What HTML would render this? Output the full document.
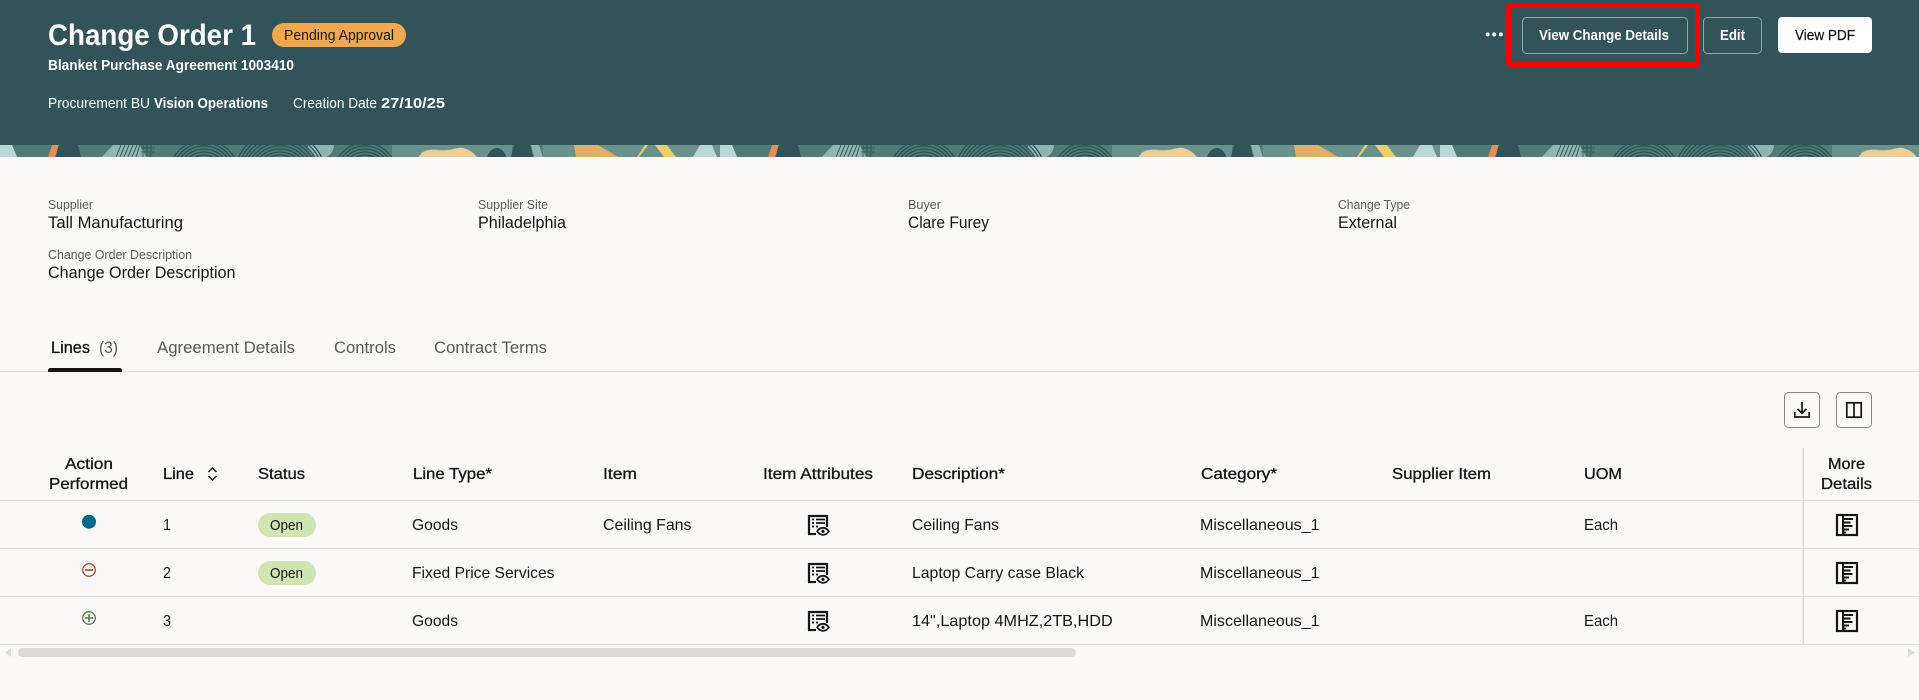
<!DOCTYPE html>
<html lang="en">
<head>
<meta charset="utf-8">
<title>Change Order 1</title>
<style>
html,body{margin:0;padding:0;background:#fbf9f8;width:1919px;height:700px;overflow:hidden}
svg{display:block}
text{font-family:"Liberation Sans",Arial,sans-serif;white-space:pre}
.t{fill:#161513;font-size:16px}
.h{fill:#161513;font-size:16px;stroke:#161513;stroke-width:.3px}
.l{fill:#5b5957;font-size:13px}
.v{fill:#161513;font-size:17px}
.w{fill:#fff;font-size:15px}
.wb{fill:#fff;font-size:15px;font-weight:bold}
.tab{fill:#5b5957;font-size:17px}
</style>
</head>
<body>
<svg width="1919" height="700" viewBox="0 0 1919 700" xmlns="http://www.w3.org/2000/svg">
<defs>
<g id="band">
<svg x="0" y="0" width="720" height="12" viewBox="0 0 720 12">
<rect width="720" height="12" fill="#4f7a76"/>
<rect x="392" width="120" height="12" fill="#6a928c"/>
<rect x="543" width="177" height="12" fill="#6a928c"/>
<polygon points="113,0 140,0 146,12 102,12" fill="#8fb5b1"/>
<g stroke="#32535a" stroke-width="1" fill="none" opacity=".85">
<path d="M116 12L121 0M120 12L125 0M124 12L129 0M128 12L133 0M132 12L137 0M136 12L140 0"/>
<path d="M143 0V12M147 0V12M151 0V12M141 3H155M141 7H155"/>
</g>
<circle cx="321" cy="0" r="13" fill="#8fb5b1"/>
<g fill="none" stroke="#2e4f54" stroke-width="1.200">
<circle cx="204" cy="30" r="20"/><circle cx="204" cy="30" r="23"/><circle cx="204" cy="30" r="26"/><circle cx="204" cy="30" r="29"/><circle cx="204" cy="30" r="32"/><circle cx="204" cy="30" r="35"/>
<circle cx="280" cy="32" r="22"/><circle cx="280" cy="32" r="25"/><circle cx="280" cy="32" r="28"/><circle cx="280" cy="32" r="31"/><circle cx="280" cy="32" r="34"/><circle cx="280" cy="32" r="37"/><circle cx="280" cy="32" r="40"/><circle cx="280" cy="32" r="43"/><circle cx="280" cy="32" r="46"/>
<circle cx="365" cy="30" r="20"/><circle cx="365" cy="30" r="23"/><circle cx="365" cy="30" r="26"/><circle cx="365" cy="30" r="29"/><circle cx="365" cy="30" r="32"/>
</g>
<rect x="392" width="120" height="12" fill="#6a928c"/>
<path d="M419 12C421 6 428 4 438 5C448 6 452 4 458 3C464 2 468 5 472 7L477 12Z" fill="#eccf98"/>
<path d="M487 12C489 6 493 3 497 3C501 3 505 7 506 12Z" fill="#32535a"/>
<polygon points="514,0 530,0 533,12 511,12" fill="#32535a"/>
<polygon points="531,0 539,0 543,12 534,12" fill="#8fb5b1"/>
<polygon points="574,0 598,0 618,12 576,12" fill="#e0ae64"/>
<polygon points="645,0 648,0 639,12 637,12" fill="#f0cb70"/>
<polygon points="655,0 667,0 676,12 664,12" fill="#f0cb70"/>
<polygon points="700,0 712,0 717,12 693,12" fill="#bcd6d8"/>
<polygon points="-20,0 12,0 17,12 -27,12" fill="#bcd6d8"/>
<polygon points="52,0 59,0 55,12 48,12" fill="#e58c58"/>
<path d="M56 12C57 6 58 2 59 0H78C79 4 80 8 81 12Z" fill="#32535a"/>
</svg>
</g>
<g id="attr" fill="none" stroke="#161513">
<path d="M1 20V1H19V12" stroke-width="2.200"/>
<path d="M0 19H8" stroke-width="2.200"/>
<path d="M4 4.500H6M8 4.500H17M4 8H6M8 8H17M4 11.500H6M8 11.500H10" stroke-width="1.800"/>
<path d="M9.200 16.300C10.800 13.700 13 12.800 15 12.800C17 12.800 19.200 13.700 20.800 16.300C19.200 18.800 17 19.800 15 19.800C13 19.800 10.800 18.800 9.200 16.300Z" stroke-width="1.800" fill="#fbf9f8"/>
<circle cx="15" cy="16.300" r="1.600" fill="#161513" stroke="none"/>
</g>
<g id="more" fill="none" stroke="#161513">
<rect x="1" y="1" width="20" height="20" stroke-width="2.200"/>
<path d="M7 1V21" stroke-width="2"/>
<path d="M7 5H17M7 8.500H14.500M7 12H16.500M7 15.500H13M7 18.500H10" stroke-width="2"/>
</g>
</defs>

<rect width="1919" height="700" fill="#fbf9f8"/>
<rect width="1919" height="145" fill="#32535a"/>
<svg x="0" y="145" width="1919" height="12">
<use href="#band" x="0"/><use href="#band" x="720"/><use href="#band" x="1440"/>
</svg>

<text x="48" y="45" font-size="30" font-weight="bold" fill="#fff" textLength="208" lengthAdjust="spacingAndGlyphs">Change Order 1</text>
<rect x="272" y="23" width="134" height="24" rx="12" fill="#f0a84f"/>
<text x="284" y="40" font-size="15" fill="#161513" textLength="110" lengthAdjust="spacingAndGlyphs">Pending Approval</text>
<text class="wb" x="48" y="70" textLength="246" lengthAdjust="spacingAndGlyphs">Blanket Purchase Agreement 1003410</text>
<text class="w" x="48" y="108" textLength="102" lengthAdjust="spacingAndGlyphs">Procurement BU</text>
<text class="wb" x="154" y="108" textLength="114" lengthAdjust="spacingAndGlyphs">Vision Operations</text>
<text class="w" x="293" y="108" textLength="84" lengthAdjust="spacingAndGlyphs">Creation Date</text>
<text class="wb" x="381" y="108" textLength="64" lengthAdjust="spacingAndGlyphs">27/10/25</text>

<g fill="#fff"><circle cx="1487.600" cy="34.400" r="2"/><circle cx="1494.200" cy="34.400" r="2"/><circle cx="1500.800" cy="34.400" r="2"/></g>
<rect x="1508.500" y="5.500" width="189" height="59" rx="1" fill="none" stroke="#ff0000" stroke-width="5"/>
<rect x="1522.500" y="17.500" width="165" height="36" rx="4" fill="none" stroke="#8fa5a8"/>
<text class="wb" x="1539" y="40" textLength="130" lengthAdjust="spacingAndGlyphs">View Change Details</text>
<rect x="1703.500" y="17.500" width="58" height="36" rx="4" fill="none" stroke="#8fa5a8"/>
<text class="wb" x="1720" y="40" textLength="25" lengthAdjust="spacingAndGlyphs">Edit</text>
<rect x="1778" y="17" width="94" height="36" rx="4" fill="#fff"/>
<text x="1795" y="40" font-size="15" fill="#161513" stroke="#161513" stroke-width=".25" textLength="60" lengthAdjust="spacingAndGlyphs">View PDF</text>

<text class="l" x="48" y="209" textLength="45" lengthAdjust="spacingAndGlyphs">Supplier</text>
<text class="v" x="48" y="228" textLength="135" lengthAdjust="spacingAndGlyphs">Tall Manufacturing</text>
<text class="l" x="478" y="209" textLength="70" lengthAdjust="spacingAndGlyphs">Supplier Site</text>
<text class="v" x="478" y="228" textLength="88" lengthAdjust="spacingAndGlyphs">Philadelphia</text>
<text class="l" x="908" y="209" textLength="33" lengthAdjust="spacingAndGlyphs">Buyer</text>
<text class="v" x="908" y="228" textLength="81" lengthAdjust="spacingAndGlyphs">Clare Furey</text>
<text class="l" x="1338" y="209" textLength="72" lengthAdjust="spacingAndGlyphs">Change Type</text>
<text class="v" x="1338" y="228" textLength="59" lengthAdjust="spacingAndGlyphs">External</text>
<text class="l" x="48" y="259" textLength="144" lengthAdjust="spacingAndGlyphs">Change Order Description</text>
<text class="v" x="48" y="278" textLength="187.500" lengthAdjust="spacingAndGlyphs">Change Order Description</text>

<text x="51" y="353" font-size="17" fill="#161513" stroke="#161513" stroke-width=".3" textLength="39" lengthAdjust="spacingAndGlyphs">Lines</text>
<text class="tab" x="99" y="353" textLength="19" lengthAdjust="spacingAndGlyphs">(3)</text>
<text class="tab" x="157" y="353" textLength="138" lengthAdjust="spacingAndGlyphs">Agreement Details</text>
<text class="tab" x="334" y="353" textLength="62" lengthAdjust="spacingAndGlyphs">Controls</text>
<text class="tab" x="434" y="353" textLength="113" lengthAdjust="spacingAndGlyphs">Contract Terms</text>
<rect x="0" y="371" width="1919" height="1" fill="#dfdddb"/>
<path d="M48 372V370.500Q48 368 51 368H119Q122 368 122 370.500V372Z" fill="#161513"/>

<rect x="1784.500" y="392.500" width="35" height="35" rx="4" fill="none" stroke="#8a8886"/>
<g fill="none" stroke="#161513" stroke-width="1.700">
<path d="M1802 402V413M1797.500 408.800L1802 413.300L1806.500 408.800"/>
<path d="M1794.800 412V417H1809.200V412"/>
</g>
<rect x="1836.500" y="392.500" width="35" height="35" rx="4" fill="none" stroke="#8a8886"/>
<g fill="none" stroke="#161513" stroke-width="1.700"><rect x="1846.800" y="402.800" width="14.400" height="14.400"/><path d="M1854 403V417"/></g>

<text class="h" x="65" y="469" textLength="48" lengthAdjust="spacingAndGlyphs">Action</text>
<text class="h" x="49" y="489" textLength="79" lengthAdjust="spacingAndGlyphs">Performed</text>
<text class="h" x="163" y="479" textLength="31" lengthAdjust="spacingAndGlyphs">Line</text>
<path d="M208.500 472L212.500 468L216.500 472M208.500 476L212.500 480L216.500 476" fill="none" stroke="#161513" stroke-width="1.400"/>
<text class="h" x="258" y="479" textLength="47" lengthAdjust="spacingAndGlyphs">Status</text>
<text class="h" x="413" y="479" textLength="79" lengthAdjust="spacingAndGlyphs">Line Type*</text>
<text class="h" x="603" y="479" textLength="34" lengthAdjust="spacingAndGlyphs">Item</text>
<text class="h" x="763" y="479" textLength="110" lengthAdjust="spacingAndGlyphs">Item Attributes</text>
<text class="h" x="912" y="479" textLength="93" lengthAdjust="spacingAndGlyphs">Description*</text>
<text class="h" x="1201" y="479" textLength="76" lengthAdjust="spacingAndGlyphs">Category*</text>
<text class="h" x="1392" y="479" textLength="99" lengthAdjust="spacingAndGlyphs">Supplier Item</text>
<text class="h" x="1584" y="479" textLength="38" lengthAdjust="spacingAndGlyphs">UOM</text>
<text class="h" x="1828" y="469" textLength="37" lengthAdjust="spacingAndGlyphs">More</text>
<text class="h" x="1821" y="489" textLength="51" lengthAdjust="spacingAndGlyphs">Details</text>

<g fill="#dfdddb">
<rect x="0" y="500" width="1919" height="1"/>
<rect x="0" y="548" width="1919" height="1"/>
<rect x="0" y="596" width="1919" height="1"/>
<rect x="0" y="644" width="1919" height="1"/>
<rect x="1802.500" y="448" width="1.500" height="196"/>
</g>

<circle cx="89" cy="521.700" r="7" fill="#00688c"/>
<circle cx="89" cy="570" r="6.300" fill="none" stroke="#b8452f" stroke-width="1.300"/>
<path d="M85 570H93" stroke="#b8452f" stroke-width="1.600"/>
<circle cx="89" cy="618" r="6.300" fill="none" stroke="#5d7250" stroke-width="1.300"/>
<path d="M85 618H93M89 614V622" stroke="#5d7250" stroke-width="1.500"/>

<text class="t" x="163" y="530" textLength="8" lengthAdjust="spacingAndGlyphs">1</text>
<text class="t" x="163" y="578" textLength="8" lengthAdjust="spacingAndGlyphs">2</text>
<text class="t" x="163" y="626" textLength="8" lengthAdjust="spacingAndGlyphs">3</text>

<rect x="258" y="513" width="58" height="24" rx="12" fill="#cfe5b4"/>
<text x="270" y="530" font-size="15" fill="#161513" textLength="33" lengthAdjust="spacingAndGlyphs">Open</text>
<rect x="258" y="561" width="58" height="24" rx="12" fill="#cfe5b4"/>
<text x="270" y="578" font-size="15" fill="#161513" textLength="33" lengthAdjust="spacingAndGlyphs">Open</text>

<text class="t" x="412" y="530" textLength="46" lengthAdjust="spacingAndGlyphs">Goods</text>
<text class="t" x="412" y="578" textLength="142.500" lengthAdjust="spacingAndGlyphs">Fixed Price Services</text>
<text class="t" x="412" y="626" textLength="46" lengthAdjust="spacingAndGlyphs">Goods</text>
<text class="t" x="603" y="530" textLength="88.500" lengthAdjust="spacingAndGlyphs">Ceiling Fans</text>

<use href="#attr" x="808" y="515"/>
<use href="#attr" x="808" y="563"/>
<use href="#attr" x="808" y="611"/>

<text class="t" x="912" y="530" textLength="87" lengthAdjust="spacingAndGlyphs">Ceiling Fans</text>
<text class="t" x="912" y="578" textLength="172" lengthAdjust="spacingAndGlyphs">Laptop Carry case Black</text>
<text class="t" x="912" y="626" textLength="200.700" lengthAdjust="spacingAndGlyphs">14",Laptop 4MHZ,2TB,HDD</text>

<text class="t" x="1200" y="530" textLength="119.500" lengthAdjust="spacingAndGlyphs">Miscellaneous_1</text>
<text class="t" x="1200" y="578" textLength="119.500" lengthAdjust="spacingAndGlyphs">Miscellaneous_1</text>
<text class="t" x="1200" y="626" textLength="119.500" lengthAdjust="spacingAndGlyphs">Miscellaneous_1</text>

<text class="t" x="1584" y="530" textLength="34" lengthAdjust="spacingAndGlyphs">Each</text>
<text class="t" x="1584" y="626" textLength="34" lengthAdjust="spacingAndGlyphs">Each</text>

<use href="#more" x="1836" y="514"/>
<use href="#more" x="1836" y="562"/>
<use href="#more" x="1836" y="610"/>

<polygon points="5,652.500 11,648 11,657" fill="#dedcda"/>
<rect x="18" y="648" width="1058" height="9" rx="4.500" fill="#dcdbd9"/>
<polygon points="1915,652.500 1908,648 1908,657" fill="#dedcda"/>
</svg>
</body>
</html>
